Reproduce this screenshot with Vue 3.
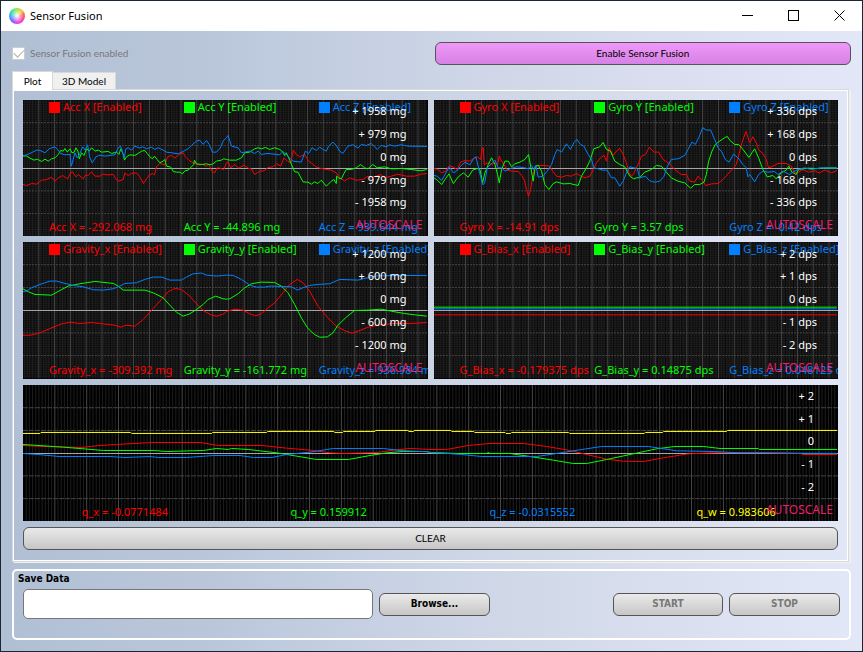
<script setup>
import { ref } from 'vue'

const RED = '#ff0000'
const GREEN = '#00ff00'
const BLUE = '#0080ff'
const YELLOW = '#ffff00'

const tab = ref('plot')
const path = ref('')

// Each span is [x origin, 'x,y x,y ...']; spans are joined into one polyline.
function trace(color, top, ...spans) {
  const points = spans
    .map(([origin, text]) =>
      text
        .split(' ')
        .map((pair) => {
          const [x, y] = pair.split(',').map(Number)
          return `${x + origin},${y - top}`
        })
        .join(' ')
    )
    .join(' ')
  return { color, points }
}

const charts = [
  {
    id: 'acc',
    width: 1215,
    labels: ['+ 1958 mg', '+ 979 mg', '0 mg', '- 979 mg', '- 1958 mg'],
    series: [
      { color: RED, legend: 'Acc X [Enabled]', value: 'Acc X = -292.068 mg' },
      { color: GREEN, legend: 'Acc Y [Enabled]', value: 'Acc Y = -44.896 mg' },
      { color: BLUE, legend: 'Acc Z [Enabled]', value: 'Acc Z = 939.644 mg' },
    ],
    traces: [
      trace(RED, 12,
        [-9, '9,265 20,268 35,262 50,264 65,252 80,250 95,243 105,255 115,245 128,238 143,248 152,230 158,227 168,242 175,235 190,248 197,236 205,238 215,227 225,240 240,240 250,234 262,236 280,235 288,248 295,255 310,250 315,230 325,238 335,232 350,230 360,242 371,262 380,248 388,237 398,232 404,236 410,212 420,202 435,206 443,182 455,178 465,186 478,175 490,170 497,182 508,193 520,200 535,206 550,205 558,210 568,204 575,224 585,230 592,215 600,216 612,220'],
        [606, '5,200 10,197 18,215 30,205 42,216 58,207 70,216 80,218 90,235 105,225 118,224 130,214 145,212 155,202 168,210 178,185 188,195 198,200 206,162 215,175 225,182 240,175 252,195 262,202 275,213 295,218 320,222 335,230 345,245 360,254 375,245 395,252 415,250 430,240 445,243 470,235 480,245 500,240 520,234 545,240 570,240 590,234 607,232']),
      trace(GREEN, 12,
        [-9, '9,179 20,180 30,186 42,192 52,189 65,196 75,189 85,195 95,188 105,185 115,175 122,163 130,165 135,157 142,168 150,158 156,170 163,168 168,155 174,165 178,188 185,170 192,178 200,158 208,165 215,155 225,165 235,162 245,168 265,166 275,172 290,168 297,175 303,158 310,175 314,192 320,182 330,176 345,178 355,172 365,165 375,163 382,172 390,182 398,188 404,180 412,190 420,200 430,195 435,190 440,210 450,212 455,215 460,226 470,228 480,228 488,233 495,224 505,222 515,212 522,205 524,192 530,203 545,205 560,203 570,206 580,203 590,195 605,192 612,188'],
        [606, '5,190 15,192 35,192 50,185 60,170 75,168 90,158 100,155 110,158 122,154 135,160 150,155 165,160 175,168 180,178 185,170 195,192 202,208 210,227 220,228 235,257 250,258 260,264 270,257 280,262 290,252 305,270 320,255 328,250 335,262 336,240 342,245 350,248 358,232 365,220 380,220 395,215 408,205 420,215 430,218 445,205 458,215 480,212 500,218 530,217 560,220 590,224 607,220']),
      trace(BLUE, 12,
        [-9, '9,180 30,172 50,162 60,163 75,170 88,158 105,152 113,160 122,172 135,176 150,175 154,210 160,190 165,170 172,185 180,172 188,152 196,162 203,146 210,185 217,200 228,182 240,177 255,180 270,178 285,176 295,155 302,150 307,165 313,185 318,158 325,155 335,162 345,150 360,156 368,152 380,158 395,153 405,160 415,155 430,162 440,168 455,170 475,173 490,166 505,158 515,148 530,135 540,132 550,145 560,133 568,145 578,168 590,168 602,155 610,135'],
        [606, '5,125 10,118 20,150 40,155 50,170 75,165 90,172 100,165 110,175 130,172 165,176 175,166 187,178 205,195 230,198 242,165 252,172 262,155 275,163 285,153 295,160 305,165 312,150 325,138 335,148 345,165 355,172 370,150 385,146 400,156 410,145 425,148 440,142 450,152 458,160 470,148 485,152 495,146 510,150 530,146 550,150 607,151']),
    ],
  },
  {
    id: 'gyro',
    width: 1215,
    labels: ['+ 336 dps', '+ 168 dps', '0 dps', '- 168 dps', '- 336 dps'],
    series: [
      { color: RED, legend: 'Gyro X [Enabled]', value: 'Gyro X = -14.91 dps' },
      { color: GREEN, legend: 'Gyro Y [Enabled]', value: 'Gyro Y = 3.57 dps' },
      { color: BLUE, legend: 'Gyro Z [Enabled]', value: 'Gyro Z = -0.42 dps' },
    ],
    traces: [
      trace(RED, 12,
        [-12, '12,217 22,219 35,230 47,225 58,208 70,213 82,220 92,198 105,193 120,195 130,188 142,182 152,190 157,155 160,155 163,205 175,200 185,206 195,200 203,206 208,180 215,195 225,210 232,222 245,225 265,226 275,238 283,250 290,280 296,300 302,280 308,245 315,215 325,208 345,208 360,210 368,225 380,240 395,243 410,238 425,240 440,232 450,238 465,245 480,240 490,222 500,200 512,185 523,178 530,195 538,155 550,178 560,165 570,157 580,175 590,200 598,230 605,240 612,232'],
        [603, '5,215 10,205 20,180 32,175 44,153 58,168 72,168 85,190 105,203 120,220 140,235 155,235 165,255 180,258 190,240 205,255 213,268 230,263 250,262 265,250 280,233 297,215 305,205 313,175 322,140 334,106 345,140 355,122 365,140 372,162 385,172 395,190 402,215 415,210 430,202 455,202 470,210 480,230 492,228 505,220 522,228 540,224 555,230 570,222 592,230 607,223']),
      trace(GREEN, 12,
        [-12, '12,245 22,252 35,265 45,250 57,233 70,262 85,242 100,230 115,243 128,222 142,217 150,220 158,260 165,230 175,205 185,185 195,205 203,235 208,260 215,220 225,195 235,195 245,212 255,203 270,198 285,190 296,175 303,215 310,255 316,210 325,207 335,225 345,265 357,280 370,262 380,257 400,263 420,262 445,268 455,240 470,215 480,195 492,158 510,152 520,139 530,160 542,165 555,195 570,205 585,212 600,240 612,248'],
        [603, '5,245 15,244 30,228 50,220 65,208 80,210 95,228 110,245 130,255 150,260 168,276 180,265 195,265 208,258 215,235 222,195 232,165 242,145 255,135 270,125 278,121 285,132 300,145 312,145 325,160 343,184 352,170 360,158 372,185 385,220 398,242 415,238 425,248 440,230 455,222 463,210 472,228 485,235 492,220 520,216 545,217 575,215 607,215']),
      trace(BLUE, 12,
        [-12, '12,238 22,240 35,253 45,235 58,212 70,230 80,225 92,210 105,198 120,206 130,188 138,182 148,225 158,265 164,262 172,215 182,205 195,192 205,215 215,215 225,225 240,218 260,212 280,214 296,218 305,208 312,222 318,208 325,243 340,240 352,225 365,205 375,175 382,160 395,168 410,143 422,160 432,140 441,130 452,145 462,150 475,175 485,190 492,215 505,218 520,222 532,222 545,245 555,245 570,270 580,255 592,225 600,212 612,215'],
        [603, '5,216 8,218 15,245 32,240 45,254 60,258 75,255 88,240 98,210 110,190 130,188 150,178 160,160 172,138 182,145 192,125 204,95 215,102 228,102 240,130 250,155 262,168 272,190 283,198 297,174 310,185 325,205 335,215 340,242 346,235 360,257 372,235 385,225 400,228 420,226 430,235 445,225 465,235 475,228 490,220 510,215 530,220 560,215 607,216']),
    ],
  },
  {
    id: 'gravity',
    width: 1215,
    labels: ['+ 1200 mg', '+ 600 mg', '0 mg', '- 600 mg', '- 1200 mg'],
    series: [
      { color: RED, legend: 'Gravity_x [Enabled]', value: 'Gravity_x = -309.392 mg' },
      { color: GREEN, legend: 'Gravity_y [Enabled]', value: 'Gravity_y = -161.772 mg' },
      { color: BLUE, legend: 'Gravity_z [Enabled]', value: 'Gravity_z = 936.984 mg' },
    ],
    traces: [
      trace(RED, 13,
        [-9, '9,292 30,292 60,285 90,272 125,258 150,253 180,257 215,254 250,258 285,262 303,268 318,262 345,265 370,245 400,212 425,185 445,162 465,152 485,155 510,175 530,198 550,218 575,232 592,235 612,228'],
        [606, '5,221 30,214 55,217 75,228 92,234 110,228 130,210 150,195 175,165 195,140 218,125 235,135 255,160 280,205 310,240 335,265 360,278 382,286 400,280 430,268 470,260 510,257 560,257 607,254']),
      trace(GREEN, 13,
        [-9, '9,153 25,162 45,170 95,172 120,158 145,145 180,138 225,131 280,137 295,145 310,157 375,157 400,165 430,180 450,202 470,223 490,235 510,228 530,215 550,200 565,185 588,175 610,183'],
        [606, '5,184 15,183 40,168 60,150 80,138 110,133 150,134 170,145 190,165 210,200 230,240 250,272 270,290 285,298 308,297 325,285 340,262 365,238 390,218 430,217 470,214 500,220 540,227 570,231 607,235']),
      trace(BLUE, 13,
        [-9, '9,162 20,160 35,150 60,140 90,130 110,130 135,137 165,144 190,147 220,156 250,157 280,153 300,145 315,137 350,135 375,125 400,118 425,118 450,127 485,127 500,118 520,108 545,106 560,112 590,115 612,113'],
        [606, '5,112 25,113 50,125 75,142 95,148 120,148 135,145 200,147 218,157 235,150 255,143 280,140 315,138 345,125 400,127 430,120 460,114 607,113']),
    ],
  },
  {
    id: 'bias',
    width: 1215,
    labels: ['+ 2 dps', '+ 1 dps', '0 dps', '- 1 dps', '- 2 dps'],
    series: [
      { color: RED, legend: 'G_Bias_x [Enabled]', value: 'G_Bias_x = -0.179375 dps' },
      { color: GREEN, legend: 'G_Bias_y [Enabled]', value: 'G_Bias_y = 0.14875 dps' },
      { color: BLUE, legend: 'G_Bias_z [Enabled]', value: 'G_Bias_z = 0.048125 dps' },
    ],
    traces: [
      trace(RED, 12, [0, '0,230 1210,230']),
      trace(GREEN, 12, [0, '0,207 1210,207']),
      trace(BLUE, 12, [0, '0,212 1210,212']),
    ],
  },
  {
    id: 'quaternion',
    width: 2445,
    wide: true,
    labels: ['+ 2', '+ 1', '0', '- 1', '- 2'],
    series: [
      { color: RED, value: 'q_x = -0.0771484' },
      { color: GREEN, value: 'q_y = 0.159912' },
      { color: BLUE, value: 'q_z = -0.0315552' },
      { color: YELLOW, value: 'q_w = 0.983606' },
    ],
    traces: [
      trace(RED, 9,
        [-39, '39,190 100,193 215,196 270,190 320,187 430,181 570,181 625,190 755,190 830,198 910,205 960,212 1000,214 1100,211 1150,204 1200,199 1260,202'],
        [1221, '0,202 50,202 115,190 180,184 280,184 350,193 420,205 470,217 530,231 580,237 640,238 700,227 775,215 850,212 1000,211 1110,214 1120,217 1221,217']),
      trace(GREEN, 9,
        [-39, '39,187 160,195 280,205 430,205 470,208 580,205 620,199 655,202 665,199 715,202 800,212 860,222 920,232 1015,232 1080,220 1130,212 1180,208 1250,208'],
        [1221, '0,211 80,214 170,214 175,211 180,214 240,214 300,223 370,234 430,244 470,244 530,232 600,217 680,200 735,193 820,193 870,199 985,199 988,202 1221,202']),
      trace(BLUE, 9,
        [-39, '39,214 85,217 147,223 300,223 345,226 420,223 445,226 530,226 610,220 690,220 730,226 785,226 830,217 900,210 970,199 1120,199 1170,205 1255,209'],
        [1221, '0,211 55,214 95,217 155,223 320,223 360,217 430,206 515,193 655,193 740,206 850,208 930,212 1221,214']),
      trace(YELLOW, 9,
        [-39, '39,154 90,154 93,151 362,151 365,154 605,154 608,151 770,151 773,148 970,148 975,151 998,151 1001,148 1095,148 1097,145 1193,145 1197,148 1210,148 1214,145 1260,145'],
        [1221, '62,145 65,148 131,148 134,151 225,151 228,154 242,154 245,151 416,151 419,154 643,154 646,151 698,151 701,148 890,148 893,145 1221,145']),
    ],
  },
]

const SAMPLES = 256
function columns(width, major) {
  let d = ''
  for (let i = 1; i < SAMPLES; i++) {
    if ((i % 10 === 0) === major) d += `M${(i * width) / SAMPLES} 0V408`
  }
  return d
}
function rows(width) {
  return [68, 136, 272, 340].map((y) => `M0 ${y}H${width}`).join('')
}
function fineRows(width) {
  let d = ''
  for (let i = 1; i < 60; i++) d += `M0 ${i * 6.8}H${width}`
  return d
}
</script>

<template>
  <div class="window">
    <header class="titlebar">
      <span class="logo" aria-hidden="true"></span>
      <h1>Sensor Fusion</h1>
      <button class="sys" aria-label="Minimize">
        <svg width="11" height="11" viewBox="0 0 11 11"><path d="M0 5.5H11" /></svg>
      </button>
      <button class="sys" aria-label="Maximize">
        <svg width="11" height="11" viewBox="0 0 11 11"><path d="M.5 .5H10.500V10.500H.5Z" /></svg>
      </button>
      <button class="sys" aria-label="Close">
        <svg class="smooth" width="11" height="11" viewBox="0 0 11 11"><path d="M.5 .5L10.500 10.500M10.500 .5L.5 10.500" /></svg>
      </button>
    </header>

    <main class="body">
      <div class="top">
        <label class="check">
          <input type="checkbox" checked disabled />
          <span>Sensor Fusion enabled</span>
        </label>
        <button class="btn accent">Enable Sensor Fusion</button>
      </div>

      <div class="tabs" role="tablist">
        <button class="tab" :class="{ active: tab === 'plot' }" role="tab" :aria-selected="tab === 'plot'" @click="tab = 'plot'">Plot</button>
        <button class="tab" :class="{ active: tab === 'model' }" role="tab" :aria-selected="tab === 'model'" @click="tab = 'model'">3D Model</button>
      </div>

      <section class="pane" role="tabpanel">
        <div class="charts">
          <div v-for="c in charts" :key="c.id" class="chart" :class="{ wide: c.wide }">
            <svg class="lines" :viewBox="`0 0 ${c.width} 408`" preserveAspectRatio="none">
              <path class="minor" :d="columns(c.width, false)" />
              <path v-if="!c.wide" class="minor fine" :d="fineRows(c.width)" />
              <path class="major" :d="columns(c.width, true)" />
              <path class="row" :d="rows(c.width)" />
              <path class="axis" :d="`M0 205H${c.width}`" />
              <polyline v-for="t in c.traces" :key="t.color" :points="t.points" :stroke="t.color" />
            </svg>
            <div v-if="!c.wide" class="series legend">
              <span v-for="s in c.series" :key="s.legend" :style="{ color: s.color }"><i></i>{{ s.legend }}</span>
            </div>
            <div class="series values">
              <span v-for="s in c.series" :key="s.value" :style="{ color: s.color }">{{ s.value }}</span>
            </div>
            <div class="scale">
              <span v-for="l in c.labels" :key="l">{{ l }}</span>
            </div>
            <span class="auto">AUTOSCALE</span>
          </div>
        </div>
        <button class="btn">CLEAR</button>
      </section>

      <section class="save">
        <label for="save-path">Save Data</label>
        <div class="save-row">
          <input id="save-path" v-model="path" type="text" />
          <button class="btn strong">Browse...</button>
          <span></span>
          <button class="btn strong" disabled>START</button>
          <button class="btn strong" disabled>STOP</button>
        </div>
      </section>
    </main>
  </div>
</template>

<style>
body {
  margin: 0;
}
</style>

<style scoped>
* {
  box-sizing: border-box;
}
.window {
  display: flex;
  flex-direction: column;
  min-height: 100vh;
  border: 1px solid #1b2733;
  font-family: Lato, "Noto Sans", sans-serif;
  font-size: 10px;
  color: #000;
}
button,
input {
  font: inherit;
  color: inherit;
  margin: 0;
}
.titlebar {
  display: flex;
  align-items: center;
  height: 30px;
  padding-left: 8px;
  background: #fff;
}
.logo {
  width: 16px;
  height: 16px;
  border-radius: 50%;
  background:
    radial-gradient(circle, #fff 0, rgba(255, 255, 255, 0.5) 30%, rgba(255, 255, 255, 0) 62%),
    conic-gradient(#9be83c, #f5c542 45deg, #ff5a4a 80deg, #ff3fa0 120deg, #e23cf0 175deg, #7a5cff 225deg, #35a5f5 265deg, #2fdcb0 305deg, #9be83c);
}
h1 {
  flex: 1;
  margin: 0;
  padding: 0 0 2px 5px;
  font-family: "Noto Sans", sans-serif;
  font-size: 11px;
  font-weight: 400;
}
.sys {
  display: grid;
  place-items: center;
  width: 46px;
  height: 30px;
  padding: 0 0 2px;
  border: 0;
  background: none;
}
.sys path {
  fill: none;
  stroke: #000;
  shape-rendering: crispEdges;
}
.sys .smooth path {
  shape-rendering: auto;
}
.body {
  flex: 1;
  display: flex;
  flex-direction: column;
  padding: 11px;
  background: linear-gradient(90deg, #b1bfd4, #bac7db 25%, #cbd4e5 50%, #d8deed 75%, #e2e8f7);
}
.top {
  display: grid;
  grid-template-columns: 1fr 1fr;
  gap: 6px;
  align-items: center;
}
.check {
  display: flex;
  align-items: center;
  gap: 5px;
  color: #787878;
}
.check span {
  padding-bottom: 2px;
}
.check input {
  appearance: none;
  display: grid;
  place-items: center;
  width: 13px;
  height: 13px;
  border: 1px solid #ccc;
  background: #fff;
}
.check input::after {
  content: "";
  width: 9px;
  height: 5px;
  margin-bottom: 3px;
  border: solid #b0b0b0;
  border-width: 0 0 1px 1px;
  transform: rotate(-45deg);
}
.btn {
  height: 23px;
  padding: 0 8px 2px;
  border: 1px solid #555;
  border-radius: 6px;
  background: linear-gradient(#eaeaea, #c6c6c6);
}
.btn.accent {
  background: linear-gradient(#ef98f9, #d681e4);
}
.btn.strong {
  font-family: "DejaVu Sans Condensed", "DejaVu Sans", sans-serif;
  font-weight: 700;
}
.btn:disabled {
  color: #787878;
}
.tabs {
  display: flex;
  align-items: flex-end;
  height: 24px;
}
.tab {
  min-width: 41px;
  height: 17px;
  padding: 0 9px;
  border: 1px solid #d9d9d9;
  border-left: 0;
  border-bottom: 0;
  background: #f0f0f0;
}
.tab.active {
  position: relative;
  height: 19px;
  margin-bottom: -1px;
  border-left: 1px solid #d9d9d9;
  background: #fff;
}
.pane {
  flex: 1;
  display: flex;
  flex-direction: column;
  gap: 6px;
  margin: 0 2px 7px 0;
  padding: 10px 10px 11px;
  border: 1px solid #d9d9d9;
  box-shadow: inset 0 0 0 1px #fff, 2px 1px 0 #f0f0f0;
}
.charts {
  flex: 1;
  display: grid;
  grid-template-columns: repeat(2, minmax(0, 1fr));
  grid-auto-rows: minmax(120px, 1fr);
  gap: 6px;
}
.chart {
  position: relative;
  display: flex;
  flex-direction: column;
  justify-content: space-between;
  overflow: hidden;
  background: #000;
  font-family: "Noto Sans", sans-serif;
  font-size: 11px;
  line-height: 14px;
  white-space: nowrap;
}
.chart.wide {
  grid-column: 1 / -1;
  justify-content: flex-end;
}
.lines {
  position: absolute;
  inset: 0;
  width: 100%;
  height: 100%;
}
.lines * {
  fill: none;
  stroke-width: 1px;
  vector-effect: non-scaling-stroke;
  shape-rendering: crispEdges;
}
.minor {
  stroke: #1e1e1e;
}
.fine {
  stroke-dasharray: 3 1;
}
.major {
  stroke: #484848;
}
.row {
  stroke: #444;
  stroke-dasharray: 2 1;
}
.wide .row {
  stroke-dasharray: 5 1;
}
.axis {
  stroke: #a8a8a8;
}
.series {
  position: relative;
  display: grid;
  grid-template-columns: repeat(3, minmax(0, 1fr));
}
.series span {
  display: flex;
  align-items: center;
  padding-left: 26px;
}
.series i {
  flex: none;
  width: 11px;
  height: 11px;
  margin-right: 3px;
  background: currentColor;
}
.values {
  padding-bottom: 2px;
}
.wide .values {
  grid-template-columns: repeat(4, minmax(0, 1fr));
}
.wide .values span {
  justify-content: center;
  padding: 0;
}
.scale {
  position: absolute;
  inset: 0;
  display: grid;
  grid-template-rows: repeat(6, 1fr);
  align-items: center;
  justify-items: end;
  padding-right: 21px;
  color: #fff;
}
.wide .scale {
  padding-right: 24px;
}
.auto {
  position: absolute;
  right: 5px;
  bottom: 4px;
  font-size: 12px;
  color: #f01c68;
}
.save {
  display: flex;
  flex-direction: column;
  gap: 2px;
  padding: 0 9px 19px;
  border: 2px solid #fff;
  border-radius: 5px;
}
.save label {
  margin-left: -5px;
  font-family: "DejaVu Sans Condensed", "DejaVu Sans", sans-serif;
  font-weight: 700;
  line-height: 16px;
}
.save-row {
  display: grid;
  grid-template-columns: minmax(0, 1fr) 111px 111px 110px 111px;
  gap: 6px;
  align-items: center;
}
.save-row input {
  height: 30px;
  padding: 0 6px;
  border: 1px solid #777;
  border-radius: 5px;
  background: #fff;
}
</style>
